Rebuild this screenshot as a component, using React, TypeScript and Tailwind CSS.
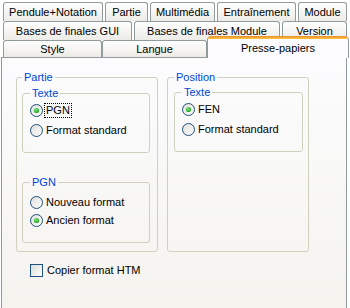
import React from "react";

// ---- small XP-style building blocks ----

const font = { fontFamily: '"Liberation Sans", Arial, sans-serif' };

const Tab = ({ label, w, active = false }: { label: string; w: string; active?: boolean }) => {
  if (active) {
    return (
      <div
        className={`${w} relative z-10 -mt-[3px] -mb-[1px] h-[21px] flex items-start justify-center pt-[3px] border-x border-[#919b9c] rounded-t-[3px] bg-[#fcfcfe] text-black`}
      >
        <div className="absolute left-0 right-0 -top-px h-[3px] rounded-t-[3px] bg-gradient-to-b from-[#e68b2c] to-[#ffc73c]" />
        {label}
      </div>
    );
  }
  return (
    <div
      className={`${w} h-full flex items-center justify-center border-t border-x border-[#919b9c] rounded-t-[3px] bg-gradient-to-b from-white to-[#ecebe6] text-black`}
    >
      {label}
    </div>
  );
};

const Radio = ({ checked = false }: { checked?: boolean }) => (
  <svg width="13" height="13" viewBox="0 0 13 13" className="shrink-0">
    <defs>
      <linearGradient id="rb" x1="0" y1="0" x2="1" y2="1">
        <stop offset="0" stopColor="#dcdcd7" />
        <stop offset="1" stopColor="#ffffff" />
      </linearGradient>
      <radialGradient id="dot" cx="0.4" cy="0.35" r="0.7">
        <stop offset="0" stopColor="#7be37a" />
        <stop offset="1" stopColor="#21a121" />
      </radialGradient>
    </defs>
    <circle cx="6.5" cy="6.5" r="6" fill="url(#rb)" stroke="#1c5180" strokeWidth="1" />
    {checked && <circle cx="6.5" cy="6.5" r="2.6" fill="url(#dot)" />}
  </svg>
);

const Option = ({
  label,
  checked,
  focused = false,
  h = "h-[20px]",
}: {
  label: string;
  checked?: boolean;
  focused?: boolean;
  h?: string;
}) => (
  <div className={`${h} flex items-center gap-[3px]`}>
    <Radio checked={checked} />
    <span
      className={`leading-[13px] px-px ${
        focused ? "border border-dotted border-black" : "border border-transparent"
      } -ml-[2px]`}
    >
      {label}
    </span>
  </div>
);

const Group = ({
  title,
  className = "",
  children,
}: {
  title: string;
  className?: string;
  children?: React.ReactNode;
}) => (
  <fieldset className={`border border-[#d0d0bf] rounded-[3px] ${className}`}>
    <legend className="px-[2px] leading-[13px] text-[#0046d5]">{title}</legend>
    {children}
  </fieldset>
);

export default function App() {
  return (
    <div className="w-[350px] h-[308px] overflow-hidden bg-white text-[11px] text-black" style={font}>
      {/* tab strip */}
      <div className="pt-[2px] pl-[3px] flex flex-col">
        <div className="h-[19px] flex gap-[2px]">
          <Tab label="Pendule+Notation" w="w-[100px]" />
          <Tab label="Partie" w="w-[43px]" />
          <Tab label="Multimédia" w="w-[65px]" />
          <Tab label="Entraînement" w="w-[79px]" />
          <Tab label="Module" w="w-[49px]" />
        </div>
        <div className="h-[19px] flex gap-[2px]">
          <Tab label="Bases de finales GUI" w="w-[129px]" />
          <Tab label="Bases de finales Module" w="w-[146px]" />
          <Tab label="Version" w="w-[65px]" />
        </div>
        <div className="h-[17px] flex">
          <Tab label="Style" w="w-[99px]" />
          <Tab label="Langue" w="w-[105px]" />
          <Tab label="Presse-papiers" w="w-[142px]" active />
        </div>
      </div>

      {/* tab page */}
      <div className="w-[346px] ml-px h-[260px] border border-[#919b9c] bg-gradient-to-b from-[#fcfcfe] to-[#f4f3ee]">
        <div className="pt-[13px] pl-[14px] flex gap-[9px]">
          <Group title="Partie" className="w-[142px] h-[181px] pl-[5px] pr-[7px]">
            <Group title="Texte" className="mt-[3px] h-[66px] pl-[7px]">
              <Option label="PGN" checked focused />
              <Option label="Format standard" />
            </Group>
            <Group title="PGN" className="mt-[23px] h-[67px] pl-[7px] pt-[4px]">
              <Option label="Nouveau format" h="h-[18px]" />
              <Option label="Ancien format" checked h="h-[18px]" />
            </Group>
          </Group>
          <Group title="Position" className="w-[142px] h-[181px] pl-[6px] pr-[5px]">
            <Group title="Texte" className="mt-[2px] h-[66px] pl-[7px]">
              <Option label="FEN" checked />
              <Option label="Format standard" />
            </Group>
          </Group>
        </div>

        <div className="mt-[12px] pl-[28px] flex items-center gap-[4px]">
          <div className="w-[13px] h-[13px] border border-[#1c5180] bg-gradient-to-br from-[#dcdcd7] to-white" />
          <span className="leading-[13px]">Copier format HTM</span>
        </div>
      </div>
    </div>
  );
}
